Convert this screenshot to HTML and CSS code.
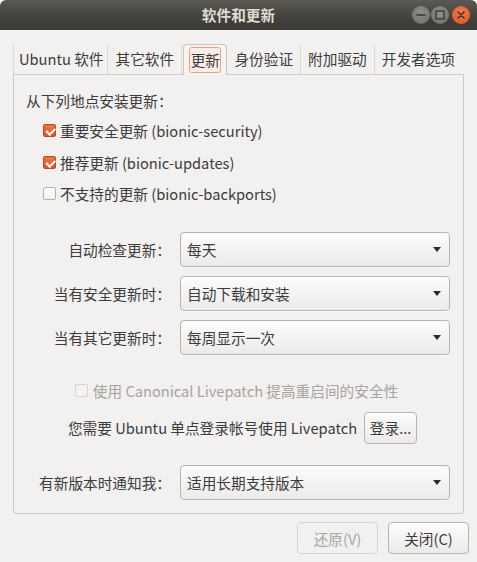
FILE: index.html
```html
<!DOCTYPE html>
<html lang="zh-CN">
<head>
<meta charset="utf-8">
<title>软件和更新</title>
<link rel="stylesheet" href="styles.css">
</head>
<body>
<div class="window">
  <header class="titlebar">
    <span class="title">软件和更新</span>
    <div class="wm">
      <span class="wm-btn">
        <svg width="18" height="18" viewBox="0 0 18 18"><rect x="4.5" y="8.2" width="9" height="1.6" fill="#3c3b37"/></svg>
      </span>
      <span class="wm-btn">
        <svg width="18" height="18" viewBox="0 0 18 18"><rect x="5" y="5" width="8" height="8" fill="none" stroke="#3c3b37" stroke-width="1.4"/></svg>
      </span>
      <span class="wm-btn close">
        <svg width="18" height="18" viewBox="0 0 18 18"><path d="M6 6L12 12M12 6L6 12" stroke="#3c3b37" stroke-width="1.7" stroke-linecap="round"/></svg>
      </span>
    </div>
  </header>
  <main class="content">
    <nav class="tabs">
      <div class="tab">Ubuntu 软件</div>
      <div class="tab">其它软件</div>
      <div class="tab active"><span class="focus">更新</span></div>
      <div class="tab">身份验证</div>
      <div class="tab">附加驱动</div>
      <div class="tab">开发者选项</div>
    </nav>
    <section class="frame">
      <div class="heading">从下列地点安装更新：</div>
      <ul class="checks">
        <li><span class="cb checked"></span>重要安全更新 (bionic-security)</li>
        <li><span class="cb checked"></span>推荐更新 (bionic-updates)</li>
        <li><span class="cb"></span>不支持的更新 (bionic-backports)</li>
      </ul>
      <div class="form">
        <span class="label">自动检查更新：</span>
        <div class="combo"><span>每天</span><i class="arrow"></i></div>
        <span class="label">当有安全更新时：</span>
        <div class="combo"><span>自动下载和安装</span><i class="arrow"></i></div>
        <span class="label">当有其它更新时：</span>
        <div class="combo"><span>每周显示一次</span><i class="arrow"></i></div>
      </div>
      <div class="livepatch"><span class="cb disabled"></span>使用 Canonical Livepatch 提高重启间的安全性</div>
      <div class="login">
        <span>您需要 Ubuntu 单点登录帐号使用 Livepatch</span>
        <button class="btn small">登录...</button>
      </div>
      <div class="form notify">
        <span class="label">有新版本时通知我：</span>
        <div class="combo"><span>适用长期支持版本</span><i class="arrow"></i></div>
      </div>
    </section>
    <footer class="actions">
      <button class="btn disabled">还原(V)</button>
      <button class="btn">关闭(C)</button>
    </footer>
  </main>
</div>
</body>
</html>
```

FILE: styles.css
```css
* { box-sizing: border-box; }
html, body { margin: 0; padding: 0; background: #ffffff; }
body {
  font-family: "Noto Sans CJK SC", sans-serif;
  font-size: 14.67px;
  color: #3c3c3c;
}
.window {
  width: 477px;
  height: 562px;
  background: #f2f1f0;
  border-radius: 6px 6px 0 0;
  overflow: hidden;
  display: flex;
  flex-direction: column;
}
.titlebar {
  height: 30px;
  flex: none;
  background: linear-gradient(#5a5953, #3e3d39 70%, #3c3b37);
  display: flex;
  align-items: center;
  justify-content: center;
  position: relative;
}
.title {
  color: #dfdbd2;
  font-weight: bold;
  font-size: 14.67px;
  line-height: 30px;
}
.wm {
  position: absolute;
  right: 7px;
  top: 6px;
  display: flex;
  gap: 1px;
}
.wm-btn {
  width: 18px;
  height: 18px;
  border-radius: 50%;
  background: radial-gradient(circle at 50% 35%, #8e8d88, #6d6c67);
  display: block;
}
.wm-btn svg { display: block; }
.wm-btn.close {
  margin-left: 2px;
  background: radial-gradient(circle at 50% 35%, #f47a4a, #e0521d);
}

.content {
  flex: 1;
  padding: 13px 8px 0 8px;
  display: flex;
  flex-direction: column;
}
.tabs {
  display: flex;
  align-items: flex-end;
  height: 31px;
  margin: 0 5px;
}
.tab {
  height: 30px;
  padding: 0 7px;
  line-height: 30px;
  white-space: nowrap;
  border-right: 1px solid #dcd8d4;
}
.tab:first-child { border-left: 1px solid #dcd8d4; padding-left: 5px; padding-right: 4px; }
.tab:last-child { border-right: none; flex: 1; }
.tab.active {
  height: 31px;
  padding: 0 5px;
  margin-left: 1px;
  border: 1px solid #cbc5bf;
  border-bottom: none;
  border-radius: 4px 4px 0 0;
  background: #f5f4f3;
  margin-bottom: -1px;
  position: relative;
  z-index: 1;
  display: flex;
  align-items: flex-start;
}
.tab.active .focus {
  display: block;
  margin-top: 2px;
  padding: 0 0.5px;
  height: 26px;
  line-height: 24px;
  border: 1px solid #f0a080;
  border-radius: 3px;
  background: #fbeee8;
}
.frame {
  height: 440px;
  margin: 0 5px;
  border: 1px solid #cfcac5;
  border-radius: 0 0 3px 3px;
  padding: 16px 13px 0 0;
}
.heading {
  line-height: 20px;
  padding-left: 12px;
}
.checks {
  list-style: none;
  margin: 4px 0 0 0;
  padding: 0 0 0 29px;
}
.checks li {
  height: 31.5px;
  display: flex;
  align-items: center;
  white-space: nowrap;
}
.cb {
  width: 13px;
  height: 13px;
  border: 1px solid #b5afa9;
  border-radius: 2px;
  background: linear-gradient(#ffffff, #f3f2f1);
  margin-right: 4px;
  flex: none;
  position: relative;
}
.cb.checked {
  border-color: #c2461b;
  background: linear-gradient(#f0773f, #dd5423);
}
.cb.checked::after {
  content: "";
  position: absolute;
  left: 3.5px;
  top: 1px;
  width: 3.5px;
  height: 6.5px;
  border: solid #ffffff;
  border-width: 0 2px 2px 0;
  transform: rotate(45deg);
}
.cb.disabled {
  border-color: #d6d2ce;
  background: #f4f3f2;
}
.form {
  margin-top: 22px;
  display: grid;
  grid-template-columns: 1fr 270px;
  column-gap: 9px;
  row-gap: 9px;
  align-items: center;
}
.label {
  text-align: right;
  white-space: nowrap;
}
.combo {
  height: 35px;
  border: 1px solid #b9b3ad;
  border-radius: 4px;
  background: linear-gradient(#fcfcfb, #edebe9);
  display: flex;
  align-items: center;
  justify-content: space-between;
  padding: 0 8px 0 6px;
  box-shadow: 0 1px 0 rgba(255,255,255,0.6);
}
.arrow {
  width: 0;
  height: 0;
  border-left: 4.5px solid transparent;
  border-right: 4.5px solid transparent;
  border-top: 5px solid #2b2b2b;
}
.livepatch {
  margin-top: 26px;
  height: 20px;
  display: flex;
  align-items: center;
  justify-content: center;
  color: #a8a39e;
  padding-left: 9px;
}
.livepatch .cb { margin-right: 5px; }
.login {
  margin-top: 11px;
  display: flex;
  align-items: center;
  justify-content: center;
  gap: 7px;
  padding-left: 21px;
}
.btn {
  font: inherit;
  color: #3c3c3c;
  height: 32px;
  border: 1px solid #b9b3ad;
  border-radius: 4px;
  background: linear-gradient(#fcfcfb, #eceae8);
  padding: 0 6px;
}
.btn.small { height: 32px; width: 53px; padding: 0; }
.notify { margin-top: 21px; }
.actions {
  margin-top: 8px;
  display: flex;
  justify-content: flex-end;
  gap: 10px;
}
.actions .btn { width: 81px; }
.btn.disabled {
  color: #aaa6a1;
  border-color: #d7d3cf;
  background: #f2f1f0;
}
```
